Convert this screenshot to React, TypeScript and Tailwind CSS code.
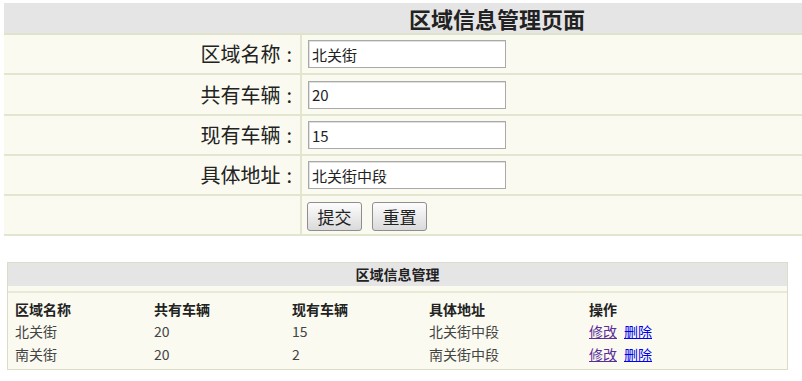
const font = {
  fontFamily: '"Noto Sans CJK SC", "Liberation Sans", sans-serif',
};

const fields = [
  { label: "区域名称", value: "北关街", h: "h-[40px]" },
  { label: "共有车辆", value: "20", h: "h-[41px]" },
  { label: "现有车辆", value: "15", h: "h-[40px]" },
  { label: "具体地址", value: "北关街中段", h: "h-[40px]" },
];

const areas = [
  { name: "北关街", total: "20", now: "15", addr: "北关街中段" },
  { name: "南关街", total: "20", now: "2", addr: "南关街中段" },
];

function Button({ children }: { children: React.ReactNode }) {
  return (
    <button
      type="button"
      className="h-[29px] w-[55px] rounded-[3px] border border-[#8e8e8e] bg-gradient-to-b from-[#fdfdfd] to-[#dadada] text-[17px] leading-none text-[#222]"
    >
      {children}
    </button>
  );
}

export default function App() {
  return (
    <div className="h-[381px] w-[802px] overflow-hidden bg-white pt-[3px] text-[#222]" style={font}>
      {/* 表单 */}
      <div className="ml-[4px] w-[986px]">
        <div className="flex h-[32px] items-center justify-center border-b-2 border-[#dfe3cc] bg-[#e5e5e5] text-[22px] font-bold">
          区域信息管理页面
        </div>
        {fields.map((f) => (
          <div key={f.label} className={`flex ${f.h} border-b-2 border-[#e3e6cf] bg-[#fafaf0]`}>
            <div className="flex w-[298px] items-center justify-end border-r-2 border-[#e3e6cf] pr-[8px] text-[20px] text-[#222]">
              {f.label}
              <span className="ml-[6px]">:</span>
            </div>
            <div className="flex items-center pl-[6px]">
              <input
                readOnly
                value={f.value}
                className="h-[28px] w-[198px] border border-[#a9a9a9] bg-white px-[3px] text-[15px] text-[#222] shadow-[inset_1px_1px_0_#e0e0e0] outline-none"
                style={font}
              />
            </div>
          </div>
        ))}
        <div className="flex h-[40px] border-b-2 border-[#e3e6cf] bg-[#fafaf0]">
          <div className="w-[298px] border-r-2 border-[#e3e6cf]" />
          <div className="flex items-center gap-[10px] pl-[5px] pt-[2px]">
            <Button>提交</Button>
            <Button>重置</Button>
          </div>
        </div>
      </div>

      {/* 列表 */}
      <div className="ml-[7px] mt-[26px] w-[781px] border border-[#dcdcc8] bg-[#fafaf0] pb-[3px] text-[14px]">
        <div className="flex h-[23px] items-center justify-center bg-[#e5e5e5] font-bold">
          区域信息管理
        </div>
        <div className="h-[7px] border-b-2 border-[#e8ead6]" />
        <div className="pt-[5px]">
          <div className="grid h-[22px] grid-cols-[139px_138px_137px_160px_1fr] items-center pl-[7px] font-bold">
            <span>区域名称</span>
            <span>共有车辆</span>
            <span>现有车辆</span>
            <span>具体地址</span>
            <span>操作</span>
          </div>
          {areas.map((a) => (
            <div
              key={a.name}
              className="grid h-[23px] grid-cols-[139px_138px_137px_160px_1fr] items-center pl-[7px] text-[#444]"
            >
              <span>{a.name}</span>
              <span>{a.total}</span>
              <span>{a.now}</span>
              <span>{a.addr}</span>
              <span className="flex gap-[7px]">
                <a href="#" className="text-[#5a2e99] underline">修改</a>
                <a href="#" className="text-[#0000ee] underline">删除</a>
              </span>
            </div>
          ))}
        </div>
      </div>
    </div>
  );
}
